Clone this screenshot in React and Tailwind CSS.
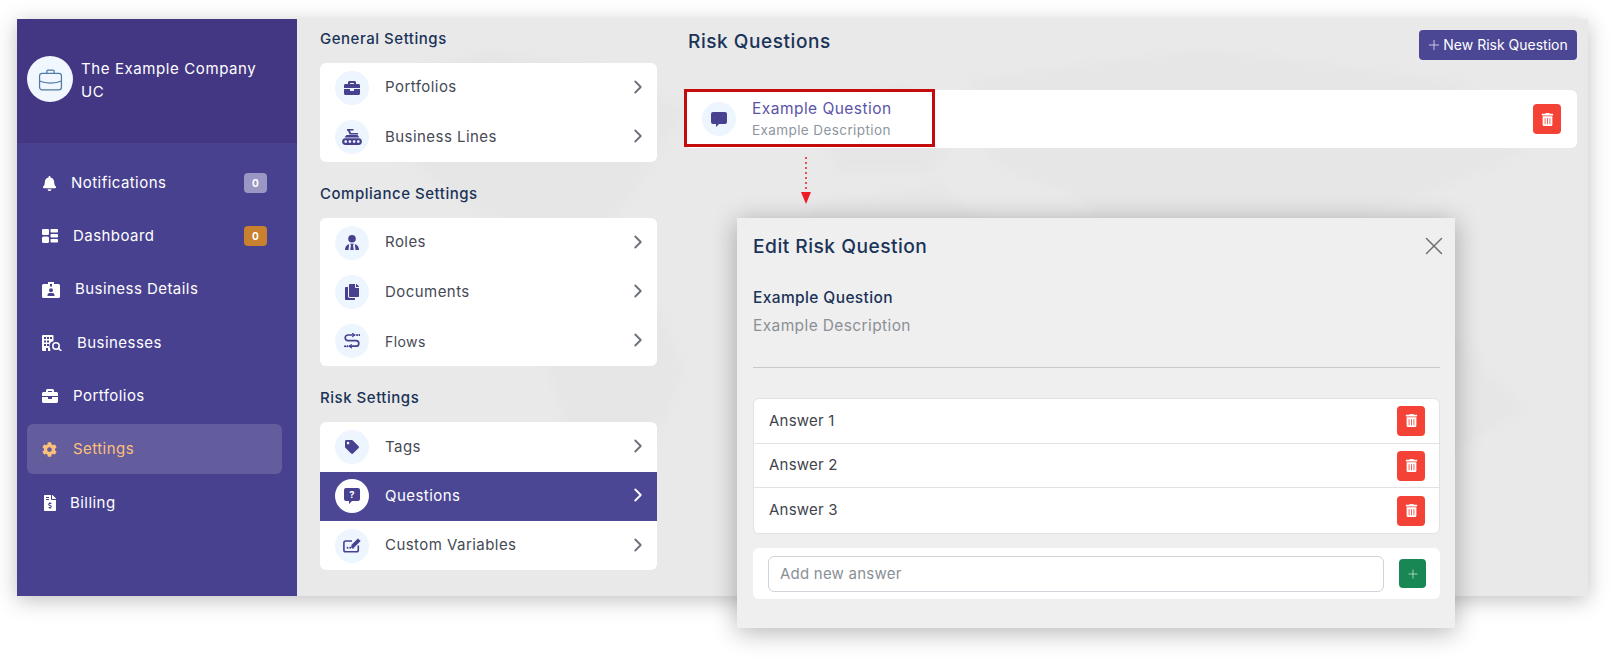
import React from "react";
import { ChevronRight, Plus, X } from "lucide-react";
import {
  FaBell,
  FaBriefcase,
  FaCog,
  FaCopy,
  FaFileInvoiceDollar,
  FaTag,
  FaTrashAlt,
} from "react-icons/fa";

function DashboardIcon() {
  return (
    <svg viewBox="0 0 16 14" className="w-4 h-[14px] shrink-0" fill="currentColor">
      <rect x="0" y="0" width="7" height="6" rx="1" />
      <rect x="0" y="7.5" width="7" height="6.5" rx="1.5" />
      <rect x="8.5" y="0" width="7.5" height="3.6" rx="0.8" />
      <rect x="8.5" y="5" width="7.5" height="3.6" rx="0.8" />
      <rect x="8.5" y="10" width="7.5" height="3.6" rx="0.8" />
    </svg>
  );
}

function BadgeIcon() {
  return (
    <svg viewBox="0 0 18 16" className="w-[18px] h-4 shrink-0" fill="currentColor">
      <path fillRule="evenodd" d="M1.5 2H6V0h6v2h4.5A1.5 1.5 0 0 1 18 3.5v11a1.5 1.5 0 0 1-1.5 1.5h-15A1.5 1.5 0 0 1 0 14.5v-11A1.5 1.5 0 0 1 1.5 2zM8 2v2.5h2V2H8zm1 4.2a2 2 0 1 0 0 4 2 2 0 0 0 0-4zM5.5 14h7v-1a2 2 0 0 0-2-2h-3a2 2 0 0 0-2 2v1z" />
    </svg>
  );
}

function BuildingSearchIcon() {
  return (
    <svg viewBox="0 0 20 16" className="w-5 h-4 shrink-0">
      <path fill="currentColor" fillRule="evenodd" d="M1 0h9.5a1 1 0 0 1 1 1v5.2a5 5 0 0 0-4 4.8c0 1 .3 2 .8 2.8V16H6v-3H4v3H1a1 1 0 0 1-1-1V1a1 1 0 0 1 1-1zm1 2v2h2V2H2zm3 0v2h2V2H5zm3 0v2h2V2H8zM2 5.5v2h2v-2H2zm3 0v2h2v-2H5zm-3 3.5v2h2V9H2zm3 0v2h2V9H5z" />
      <circle cx="14" cy="11" r="3.2" fill="none" stroke="currentColor" strokeWidth="1.5" />
      <path d="M16.4 13.4 19.4 16" stroke="currentColor" strokeWidth="1.5" />
    </svg>
  );
}

function ConveyorIcon() {
  return (
    <svg viewBox="0 0 20 16" className="w-5 h-4 shrink-0" fill="currentColor">
      <path d="M5 0h6.500v1.600H8l1 2.400h7v1.600H7.500L6 1.800H5z" />
      <path d="M2.500 8.500 4.500 6h11l2 2.500z" />
      <path fillRule="evenodd" d="M3.500 9.200h13a3.400 3.400 0 0 1 0 6.800h-13a3.400 3.400 0 0 1 0-6.800zM3.700 11.200a1.400 1.400 0 1 0 0 2.800 1.400 1.400 0 0 0 0-2.800zm4.200 0a1.400 1.400 0 1 0 0 2.800 1.400 1.400 0 0 0 0-2.800zm4.200 0a1.400 1.400 0 1 0 0 2.800 1.400 1.400 0 0 0 0-2.800zm4.200 0a1.400 1.400 0 1 0 0 2.800 1.400 1.400 0 0 0 0-2.800z" />
    </svg>
  );
}

function RolesIcon() {
  return (
    <svg viewBox="0 0 14 15" className="w-[14px] h-[15px] shrink-0" fill="currentColor">
      <circle cx="7" cy="3.800" r="3.800" />
      <path d="M0 15c0-3 1.200-5 4.200-6l-.7 6z" />
      <path d="M5.200 8.800h3.600l-.8 1.700.8 4.500H5.200l.8-4.500z" />
      <path d="M14 15c0-3-1.200-5-4.200-6l.7 6z" />
    </svg>
  );
}

function FlowIcon() {
  return (
    <svg viewBox="0 0 16 16" className="w-4 h-4 shrink-0" fill="none" stroke="currentColor" strokeWidth="1.700" strokeLinecap="round">
      <path d="M10.500 2H4a2.600 2.600 0 0 0 0 5.600h8a2.600 2.600 0 0 1 0 5.600H5.500" />
      <path d="M13 2h.1M15.400 2h.1M1 13.200h.1M3.300 13.200h.1" strokeWidth="2" />
      <path d="M8.600.4 10.600 2 8.600 3.600M7.400 11.600 5.400 13.200 7.400 14.800" strokeWidth="1.200" />
    </svg>
  );
}

function QuestionBubbleIcon() {
  return (
    <svg viewBox="0 0 16 16" className="w-4 h-4 shrink-0">
      <path fill="currentColor" d="M2 0h12a2 2 0 0 1 2 2v9a2 2 0 0 1-2 2H8l-3 3v-3H2a2 2 0 0 1-2-2V2a2 2 0 0 1 2-2z" />
      <text x="8" y="10" textAnchor="middle" fontSize="9.500" fontWeight="700" fill="#fff" fontFamily="Inter, sans-serif">?</text>
    </svg>
  );
}

function VariableIcon() {
  return (
    <svg viewBox="0 0 20 16" className="w-[18px] h-[15px] shrink-0" fill="none" stroke="currentColor" strokeWidth="1.800">
      <path d="M10 3H3a2 2 0 0 0-2 2v8a2 2 0 0 0 2 2h12a2 2 0 0 0 2-2V8" />
      <path d="M5 10.500h.1M8 10.500h.1M11 10.500h.1" strokeWidth="2" strokeLinecap="round" />
      <path fill="currentColor" stroke="none" d="M16.600.2 19.600 3 12.400 10.200l-3.400.6.500-3.600z" />
    </svg>
  );
}

function BubbleIcon() {
  return (
    <svg viewBox="0 0 16 15" className="w-4 h-[15px] shrink-0" fill="currentColor">
      <path d="M2 0h12a2 2 0 0 1 2 2v8a2 2 0 0 1-2 2H8l-3 3v-3H2a2 2 0 0 1-2-2V2a2 2 0 0 1 2-2z" />
    </svg>
  );
}

const navItems = [
  { label: "Notifications", icon: <FaBell className="text-[15px] shrink-0" />, pad: "ml-[13px]", badge: "bg-[#9b97c4]" },
  { label: "Dashboard", icon: <DashboardIcon />, pad: "ml-[15px]", badge: "bg-[#c9812f]" },
  { label: "Business Details", icon: <BadgeIcon />, pad: "ml-[17px]" },
  { label: "Businesses", icon: <BuildingSearchIcon />, pad: "ml-[19px]" },
  { label: "Portfolios", icon: <FaBriefcase className="text-base shrink-0" />, pad: "ml-[15px]" },
  { label: "Settings", icon: <FaCog className="text-[15px] shrink-0" />, pad: "ml-[15px]", active: true },
  { label: "Billing", icon: <FaFileInvoiceDollar className="text-base shrink-0" />, pad: "ml-[12px]" },
];

const settingGroups = [
  {
    title: "General Settings",
    items: [
      { label: "Portfolios", icon: <FaBriefcase className="text-base" /> },
      { label: "Business Lines", icon: <ConveyorIcon /> },
    ],
  },
  {
    title: "Compliance Settings",
    items: [
      { label: "Roles", icon: <RolesIcon /> },
      { label: "Documents", icon: <FaCopy className="text-base" /> },
      { label: "Flows", icon: <FlowIcon />, small: true },
    ],
  },
  {
    title: "Risk Settings",
    items: [
      { label: "Tags", icon: <FaTag className="text-[14px]" /> },
      { label: "Questions", icon: <QuestionBubbleIcon />, active: true },
      { label: "Custom Variables", icon: <VariableIcon /> },
    ],
  },
];

function DeleteButton() {
  return (
    <button className="w-7 h-[30px] shrink-0 flex items-center justify-center rounded bg-[#f44336] text-white text-[13px]">
      <FaTrashAlt />
    </button>
  );
}

function Sidebar() {
  return (
    <aside className="w-[280px] shrink-0 bg-[#484190] flex flex-col">
      <div className="h-[124px] bg-[#433683] pl-[10px] pr-6 pt-[37px] flex items-start gap-2">
        <div className="w-[46px] h-[46px] shrink-0 rounded-full bg-[#f0f7ff] flex items-center justify-center">
          <svg viewBox="0 0 24 24" className="w-[25px] h-[25px]" fill="none" stroke="#4f7ba6" strokeWidth="1.200">
            <path d="M8.500 6V4.200A1.200 1.200 0 0 1 9.700 3h4.600a1.200 1.200 0 0 1 1.200 1.200V6" />
            <rect x="1.500" y="6" width="21" height="16" rx="2.500" />
            <path d="M1.500 13.500c3 1.500 6 2 10.500 2s7.500-.5 10.500-2" />
          </svg>
        </div>
        <div className="text-white text-[15px] leading-[23px] tracking-[0.04em] pt-px">The Example Company UC</div>
      </div>
      <nav className="flex flex-col gap-[3.3px] pl-[10px] pr-[15px] pt-[15px]">
        {navItems.map((item) => (
          <a
            key={item.label}
            className={`h-[50px] rounded-md pl-[15px] pr-[15px] flex items-center text-[15px] tracking-[0.03em] ${
              item.active ? "bg-[#635c9d] text-[#fdc07b]" : "text-white"
            }`}
          >
            <span className="w-4 flex justify-start">{item.icon}</span>
            <span className={`flex-1 ${item.pad}`}>{item.label}</span>
            {item.badge && (
              <span className={`w-[23px] h-5 rounded-[4px] ${item.badge} text-white text-[10px] font-bold flex items-center justify-center`}>
                0
              </span>
            )}
          </a>
        ))}
      </nav>
    </aside>
  );
}

function SettingsColumn() {
  return (
    <div className="w-[337px] shrink-0 ml-[23px] pt-[10px] flex flex-col gap-[22.500px]">
      {settingGroups.map((group) => (
        <section key={group.title}>
          <h2 className="text-[15px] leading-5 font-medium tracking-[0.035em] text-[#1b3358] mb-[14px]">{group.title}</h2>
          <div className="bg-white rounded-md overflow-hidden flex flex-col">
            {group.items.map((item) => (
              <a
                key={item.label}
                className={`h-[49.300px] pl-[15px] pr-2 flex items-center ${
                  item.active ? "bg-[#4b4795] text-white" : "text-[#454a55]"
                }`}
              >
                <span
                  className={`w-[34px] h-[34px] rounded-full flex items-center justify-center text-[#484190] ${
                    item.active ? "bg-white" : "bg-[#edf5fe]"
                  }`}
                >
                  {item.icon}
                </span>
                <span className={`flex-1 ml-[16px] tracking-[0.03em] ${item.small ? "text-[14px]" : "text-[15px]"}`}>{item.label}</span>
                <ChevronRight className={`w-[22px] h-[22px] mb-[2px] ${item.active ? "text-white" : "text-[#6b7078]"}`} strokeWidth={2} />
              </a>
            ))}
          </div>
        </section>
      ))}
    </div>
  );
}

function RiskQuestions() {
  return (
    <div className="flex-1 ml-7 mr-[11px] pt-[11px] min-w-0">
      <div className="flex items-start justify-between h-[60px]">
        <h1 className="pl-[3px] text-[19px] leading-[24px] font-medium tracking-[0.03em] text-[#1b3358]">Risk Questions</h1>
        <button className="w-[158px] h-[30px] rounded bg-[#4b4795] text-white text-[14px] pr-[2px] pb-px flex items-center justify-center gap-[1px]">
          <Plus className="w-4 h-4 text-[#c9c8e0]" strokeWidth={1.5} />
          New Risk Question
        </button>
      </div>
      <div className="relative bg-white rounded-md h-[58px] pl-[17px] pr-4 flex items-center">
        <div className="absolute -left-px -top-px w-[251px] h-[58px] border-[3px] border-[#c40c0c]" />
        <span className="w-[34px] h-[34px] rounded-full bg-[#edf5fe] flex items-center justify-center text-[#484190]">
          <BubbleIcon />
        </span>
        <div className="ml-[16px] flex-1 pt-px">
          <div className="text-[15.500px] leading-5 tracking-[0.03em] text-[#5b54a6]">Example Question</div>
          <div className="text-[13.500px] leading-5 tracking-[0.03em] text-[#8d96a0] mt-px">Example Description</div>
        </div>
        <DeleteButton />
      </div>
    </div>
  );
}

function EditModal() {
  return (
    <div className="absolute left-[737px] top-[218px] w-[718px] h-[410px] bg-[#efefef] shadow-[0_4px_24px_rgba(0,0,0,0.3)] pl-4 pr-[15px] pt-[15px]">
      <div className="flex items-center justify-between h-[26px]">
        <h2 className="text-[19.200px] font-medium tracking-[0.025em] text-[#1b3358]">Edit Risk Question</h2>
        <X className="w-[30px] h-[30px] -mr-[9px] text-[#6e6e6e]" strokeWidth={1.2} />
      </div>
      <div className="mt-[29px] text-[15.500px] leading-5 font-medium tracking-[0.025em] text-[#1b3358]">Example Question</div>
      <div className="mt-2 text-[15.500px] leading-5 tracking-[0.025em] text-[#8b8f96]">Example Description</div>
      <div className="mt-[31px] border-t border-[#c9c9c9]" />
      <div className="mt-[30px] bg-white rounded-md border border-[#e2e2e2] flex flex-col divide-y divide-[#e2e2e2]">
        {["Answer 1", "Answer 2", "Answer 3"].map((answer) => (
          <div key={answer} className="h-[44.700px] pl-[15px] pr-[14px] flex items-center justify-between">
            <span className="text-[15px] tracking-[0.015em] text-[#3f444d]">{answer}</span>
            <DeleteButton />
          </div>
        ))}
      </div>
      <div className="mt-[14px] bg-white rounded-md h-[51px] pl-[15px] pr-[14px] flex items-center gap-[15px]">
        <input
          placeholder="Add new answer"
          className="flex-1 h-[36px] rounded-md border border-[#ced4da] bg-white px-[11px] text-[15px] tracking-[0.015em] placeholder:text-[#8b8f96] outline-none"
        />
        <button className="w-[27px] h-[29px] rounded bg-[#198754] flex items-center justify-center">
          <Plus className="w-[14px] h-[14px] text-[#b5dcc7]" strokeWidth={1.5} />
        </button>
      </div>
    </div>
  );
}

function WorldMap() {
  return (
    <svg viewBox="0 0 1000 560" className="absolute inset-0 w-full h-full blur-[3px]" preserveAspectRatio="none">
      <g fill="#e6e6e6">
        <path d="M60 60 150 30 250 50 300 90 260 170 220 230 180 210 120 170 70 120z" />
        <path d="M210 260 280 280 300 340 260 470 225 520 210 400 190 320z" />
        <path d="M400 90 470 60 520 100 490 150 420 150z" />
        <path d="M400 180 500 160 560 230 530 340 490 430 450 360 420 280 385 240z" />
        <path d="M520 60 700 30 900 60 950 130 830 190 790 250 720 210 660 240 600 170 540 140z" />
        <path d="M810 330 900 310 950 380 880 430 810 400z" />
      </g>
    </svg>
  );
}

export default function App() {
  return (
    <div className="relative w-[1613px] h-[662px] bg-white overflow-hidden" style={{ fontFamily: "Inter, 'Open Sans', sans-serif" }}>
      <div className="absolute left-[17px] top-[19px] w-[1571px] h-[577px] flex bg-[#e9e9e9] shadow-[0_4px_20px_rgba(0,0,0,0.25)] overflow-hidden">
        <Sidebar />
        <div className="relative flex-1 flex min-w-0">
          <WorldMap />
          <div className="relative flex-1 flex min-w-0">
            <SettingsColumn />
            <RiskQuestions />
          </div>
        </div>
      </div>
      {/* dotted arrow from the question to the modal */}
      <svg className="absolute left-[798px] top-[156px] w-4 h-[50px]" viewBox="0 0 16 50">
        <path d="M8 1V37" stroke="#ee1c25" strokeWidth="1.5" strokeDasharray="2 3" />
        <path d="M3 36H13L8 48z" fill="#ee1c25" />
      </svg>
      <EditModal />
    </div>
  );
}
